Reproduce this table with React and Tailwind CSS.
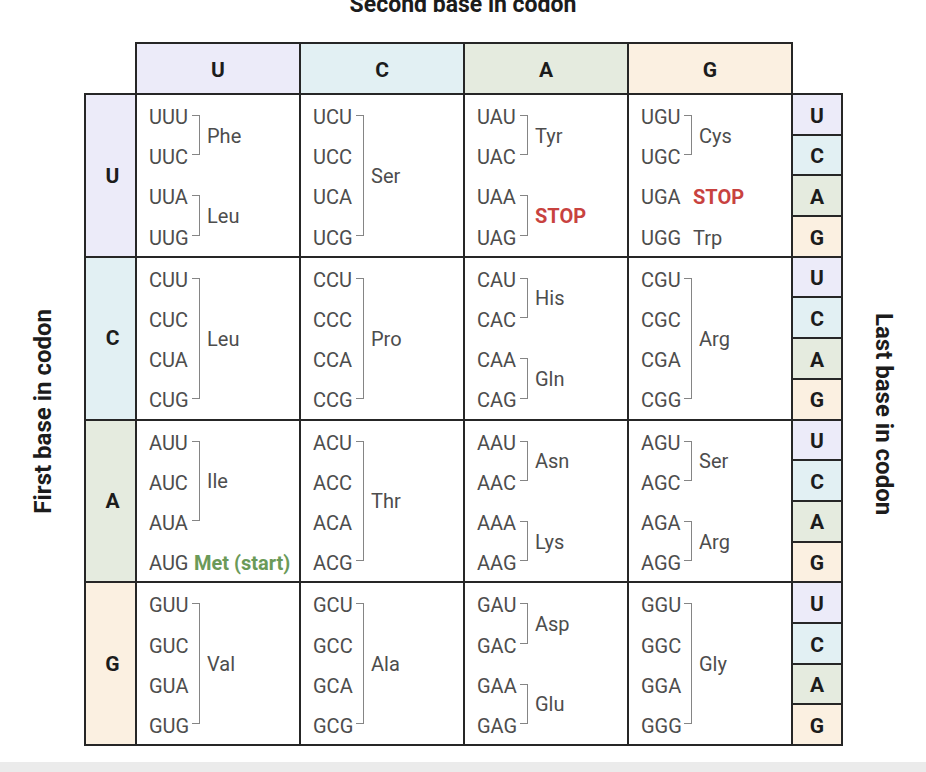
import React from "react";

const BG = {
  U: "bg-[#ecebf9]",
  C: "bg-[#e2f0f3]",
  A: "bg-[#e5ebdf]",
  G: "bg-[#fbf0e1]",
};

const SPAN = {
  1: "row-span-1",
  2: "row-span-2",
  3: "row-span-3",
  4: "row-span-4",
};

const BASES = ["U", "C", "A", "G"];

// each cell = list of groups; a group is the codons a bracket joins
const ROWS = [
  [
    [
      { c: ["UUU", "UUC"], l: "Phe" },
      { c: ["UUA", "UUG"], l: "Leu" },
    ],
    [{ c: ["UCU", "UCC", "UCA", "UCG"], l: "Ser" }],
    [
      { c: ["UAU", "UAC"], l: "Tyr" },
      { c: ["UAA", "UAG"], l: "STOP", t: "stop" },
    ],
    [
      { c: ["UGU", "UGC"], l: "Cys" },
      { c: ["UGA"], l: "STOP", t: "stop", nb: true },
      { c: ["UGG"], l: "Trp", nb: true },
    ],
  ],
  [
    [{ c: ["CUU", "CUC", "CUA", "CUG"], l: "Leu" }],
    [{ c: ["CCU", "CCC", "CCA", "CCG"], l: "Pro" }],
    [
      { c: ["CAU", "CAC"], l: "His" },
      { c: ["CAA", "CAG"], l: "Gln" },
    ],
    [{ c: ["CGU", "CGC", "CGA", "CGG"], l: "Arg" }],
  ],
  [
    [
      { c: ["AUU", "AUC", "AUA"], l: "Ile" },
      { c: ["AUG"], l: "Met (start)", t: "start", nb: true, tight: true },
    ],
    [{ c: ["ACU", "ACC", "ACA", "ACG"], l: "Thr" }],
    [
      { c: ["AAU", "AAC"], l: "Asn" },
      { c: ["AAA", "AAG"], l: "Lys" },
    ],
    [
      { c: ["AGU", "AGC"], l: "Ser" },
      { c: ["AGA", "AGG"], l: "Arg" },
    ],
  ],
  [
    [{ c: ["GUU", "GUC", "GUA", "GUG"], l: "Val" }],
    [{ c: ["GCU", "GCC", "GCA", "GCG"], l: "Ala" }],
    [
      { c: ["GAU", "GAC"], l: "Asp" },
      { c: ["GAA", "GAG"], l: "Glu" },
    ],
    [{ c: ["GGU", "GGC", "GGA", "GGG"], l: "Gly" }],
  ],
];

const cellBorder = "border-2 border-[#262626] -m-px";

function Group({ g }) {
  const labelColor =
    g.t === "stop"
      ? "text-[#c8423f] font-bold"
      : g.t === "start"
      ? "text-[#6b9a58] font-bold"
      : "text-[#4d4d4d]";
  return (
    <div className={`flex ${SPAN[g.c.length]}`}>
      <div className={`flex flex-col ${g.tight ? "w-[45px]" : "w-[43px]"}`}>
        {g.c.map((c) => (
          <div key={c} className="flex-1 flex items-center pt-[4px]">
            {c}
          </div>
        ))}
      </div>
      {g.nb ? (
        <div className={g.tight ? "w-0" : "w-[9px]"} />
      ) : (
        <div className="w-[8px] my-[20px] border-t-[1.5px] border-r-[1.5px] border-b-[1.5px] border-[#858585]" />
      )}
      <div
        className={`flex items-center whitespace-nowrap ${
          g.nb ? "pt-[4px]" : "pl-[7px] pt-[1px]"
        } ${labelColor}`}
      >
        {g.l}
      </div>
    </div>
  );
}

function CodonCell({ groups }) {
  return (
    <div
      className={`${cellBorder} row-span-4 bg-white pl-[12px] grid grid-rows-4 text-[20px] text-[#4d4d4d]`}
    >
      {groups.map((g, i) => (
        <Group key={i} g={g} />
      ))}
    </div>
  );
}

export default function App() {
  return (
    <div className="w-[926px] h-[772px] bg-white flex flex-col overflow-hidden font-['Roboto','Liberation_Sans',sans-serif] text-[#1c1c1c]">
      <div className="flex-1 flex flex-col">
        <h2 className="-mt-[8px] h-[26px] leading-[26px] text-center text-[23px] font-bold">
          Second base in codon
        </h2>

        <div className="mt-[25px] flex">
          <div className="w-[85px] mt-[51px] pb-[16px] flex items-center justify-center">
            <span className="[writing-mode:vertical-rl] rotate-180 text-[24px] font-bold whitespace-nowrap">
              First base in codon
            </span>
          </div>

          <div className="grid grid-cols-[51px_164px_164px_164px_164px_50px] grid-rows-[51px_repeat(16,40.6875px)]">
            <div />
            {BASES.map((b) => (
              <div
                key={b}
                className={`${cellBorder} ${BG[b]} flex items-center justify-center pt-[4px] text-[21px] font-bold`}
              >
                {b}
              </div>
            ))}
            <div />

            {ROWS.map((row, r) => (
              <React.Fragment key={r}>
                <div
                  className={`${cellBorder} ${BG[BASES[r]]} row-span-4 flex items-center justify-center pl-[4px] pt-[2px] text-[21px] font-bold`}
                >
                  {BASES[r]}
                </div>
                {row.map((groups, c) => (
                  <CodonCell key={c} groups={groups} />
                ))}
                {BASES.map((b) => (
                  <div
                    key={b}
                    className={`${cellBorder} ${BG[b]} flex items-center justify-center pt-[4px] text-[21px] font-bold`}
                  >
                    {b}
                  </div>
                ))}
              </React.Fragment>
            ))}
          </div>

          <div className="flex-1 mt-[51px] pb-[10px] flex items-center justify-center">
            <span className="[writing-mode:vertical-rl] text-[24px] font-bold whitespace-nowrap">
              Last base in codon
            </span>
          </div>
        </div>
      </div>
      <div className="h-[10px] bg-[#ebebeb]" />
    </div>
  );
}
